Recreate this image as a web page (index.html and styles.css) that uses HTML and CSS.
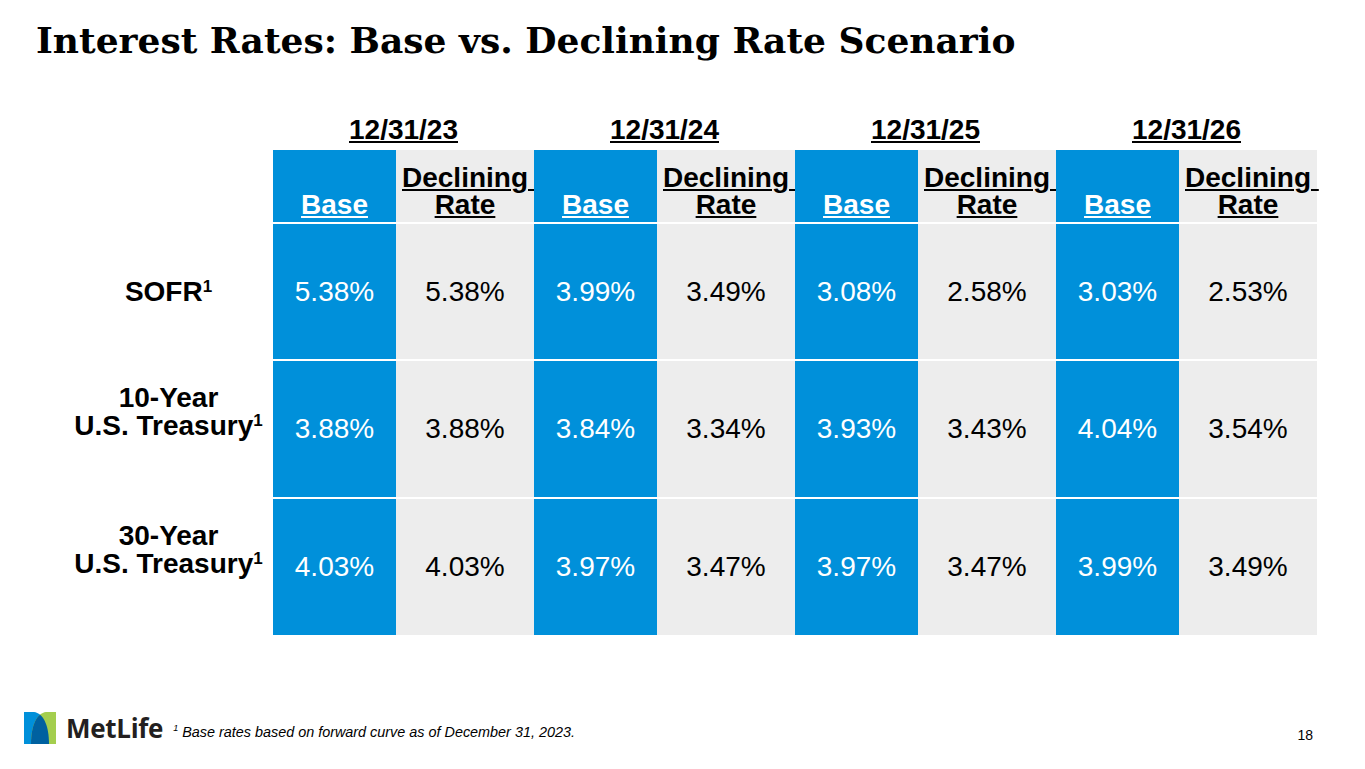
FILE: index.html
```html
<!DOCTYPE html>
<html lang="en">
<head>
<meta charset="utf-8">
<title>Interest Rates: Base vs. Declining Rate Scenario</title>
<link rel="stylesheet" href="styles.css">
</head>
<body>
<div class="slide">
  <h1 class="title">Interest Rates: Base vs. Declining Rate Scenario</h1>

  <div class="rates">
    <div class="spacer"></div>
    <div class="date">12/31/23</div>
    <div class="date">12/31/24</div>
    <div class="date">12/31/25</div>
    <div class="date">12/31/26</div>

    <div class="spacer"></div>
    <div class="head base"><span class="u">Base</span></div>
    <div class="head dec"><span class="u trail">Declining&nbsp;</span><span class="u">Rate</span></div>
    <div class="head base"><span class="u">Base</span></div>
    <div class="head dec"><span class="u trail">Declining&nbsp;</span><span class="u">Rate</span></div>
    <div class="head base"><span class="u">Base</span></div>
    <div class="head dec"><span class="u trail">Declining&nbsp;</span><span class="u">Rate</span></div>
    <div class="head base"><span class="u">Base</span></div>
    <div class="head dec"><span class="u trail">Declining&nbsp;</span><span class="u">Rate</span></div>

    <div class="label"><span>SOFR<sup>1</sup></span></div>
    <div class="val base">5.38%</div>
    <div class="val dec">5.38%</div>
    <div class="val base">3.99%</div>
    <div class="val dec">3.49%</div>
    <div class="val base">3.08%</div>
    <div class="val dec">2.58%</div>
    <div class="val base">3.03%</div>
    <div class="val dec">2.53%</div>

    <div class="label two"><span>10-Year<br>U.S. Treasury<sup>1</sup></span></div>
    <div class="val base">3.88%</div>
    <div class="val dec">3.88%</div>
    <div class="val base">3.84%</div>
    <div class="val dec">3.34%</div>
    <div class="val base">3.93%</div>
    <div class="val dec">3.43%</div>
    <div class="val base">4.04%</div>
    <div class="val dec">3.54%</div>

    <div class="label two"><span>30-Year<br>U.S. Treasury<sup>1</sup></span></div>
    <div class="val base">4.03%</div>
    <div class="val dec">4.03%</div>
    <div class="val base">3.97%</div>
    <div class="val dec">3.47%</div>
    <div class="val base">3.97%</div>
    <div class="val dec">3.47%</div>
    <div class="val base">3.99%</div>
    <div class="val dec">3.49%</div>
  </div>

  <footer class="footer">
    <div class="logo">
      <svg class="logo-mark" width="32" height="32" viewBox="0 0 32 32" aria-hidden="true">
        <defs>
          <clipPath id="blueClip">
            <path d="M0 0 H10 C19 1 25 13 25 32 H0 Z"/>
          </clipPath>
        </defs>
        <path d="M0 0 H10 C19 1 25 13 25 32 H0 Z" fill="#0090DA"/>
        <path d="M32 0 H22 C13 1 7 13 7 32 H32 Z" fill="#A4CE4E"/>
        <path d="M32 0 H22 C13 1 7 13 7 32 H32 Z" fill="#0061A0" clip-path="url(#blueClip)"/>
      </svg>
      <span class="logo-text">MetLife</span>
    </div>
    <p class="note"><sup>1</sup> Base rates based on forward curve as of December 31, 2023.</p>
    <span class="page">18</span>
  </footer>
</div>
</body>
</html>
```

FILE: styles.css
```css
* { box-sizing: border-box; }

html, body {
  margin: 0;
  padding: 0;
  background: #ffffff;
}

.slide {
  width: 1365px;
  height: 769px;
  display: flex;
  flex-direction: column;
  font-family: "Liberation Sans", Arial, sans-serif;
  color: #000;
  overflow: hidden;
}

.title {
  margin: 0;
  padding: 20px 0 0 36px;
  font-family: "DejaVu Serif", "Liberation Serif", serif;
  font-weight: 700;
  font-size: 36px;
  line-height: 40px;
  color: #000;
  white-space: nowrap;
}

.rates {
  margin: 52px 0 0 64px;
  display: grid;
  grid-template-columns: 209px repeat(4, 123px 138px);
  grid-template-rows: 36px 72px 135px 136px 136px;
  row-gap: 2px;
  font-size: 28px;
}

.date {
  grid-column: span 2;
  text-align: center;
  font-weight: 700;
  line-height: 36px;
  text-decoration: underline;
  text-decoration-thickness: 2px;
  text-underline-offset: 2px;
}

.base { background: #0090DA; color: #ffffff; }
.dec { background: #EDEDED; color: #000000; }

.head {
  display: flex;
  flex-direction: column;
  justify-content: flex-end;
  align-items: center;
  padding-bottom: 4px;
  font-weight: 700;
  line-height: 27px;
  text-align: center;
}

.u {
  text-decoration: underline;
  text-decoration-thickness: 2px;
  text-underline-offset: 2px;
}

.trail { margin-right: -7.8px; }

.val {
  display: flex;
  align-items: center;
  justify-content: center;
  line-height: 32px;
}

.label {
  display: flex;
  align-items: center;
  justify-content: center;
  text-align: center;
  font-weight: 700;
  line-height: 28px;
}

.label.two { padding-bottom: 34px; }

.label sup {
  font-size: 17px;
  line-height: 0;
  vertical-align: 9px;
}

.footer {
  margin-top: auto;
  height: 59px;
  display: flex;
  align-items: flex-start;
  padding: 2px 52px 0 24px;
}

.logo {
  display: flex;
  align-items: center;
  gap: 10px;
}

.logo-mark { display: block; }

.logo-text {
  font-family: "Open Sans", "Liberation Sans", sans-serif;
  font-weight: 700;
  font-size: 26px;
  line-height: 32px;
  color: #231F20;
  letter-spacing: -0.3px;
}

.note {
  margin: 0 0 0 10px;
  padding-top: 11px;
  font-style: italic;
  font-size: 14.4px;
  line-height: 18px;
  color: #000;
}

.note sup {
  font-size: 9px;
  line-height: 0;
  vertical-align: 6px;
}

.page {
  margin-left: auto;
  padding-top: 14px;
  font-size: 14px;
  line-height: 18px;
  color: #000;
}
```
